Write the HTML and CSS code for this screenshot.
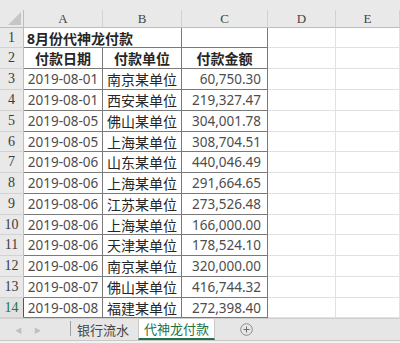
FILE: index.html
```html
<!DOCTYPE html>
<html lang="zh-CN">

<head>
  <meta charset="UTF-8">
  <meta name="viewport" content="width=device-width, initial-scale=1.0">
  <title>代神龙付款</title>
  <link rel="stylesheet" href="styles.css">
</head>

<body>
  <div class="topstrip"></div>

  <div class="sheet">
    <!-- column headers -->
    <div class="corner">
      <svg width="24" height="18" viewBox="0 0 24 18"><polygon points="21,2 21,15 8,15" fill="#c6c6c6"/></svg>
    </div>
    <div class="hd">A</div>
    <div class="hd">B</div>
    <div class="hd">C</div>
    <div class="hd">D</div>
    <div class="hd">E</div>

    <!-- row 1 -->
    <div class="rn">1</div>
    <div class="c t title span2">8月份代神龙付款</div>
    <div class="c t"></div>
    <div class="c"></div>
    <div class="c"></div>

    <!-- row 2 -->
    <div class="rn">2</div>
    <div class="c t head">付款日期</div>
    <div class="c t head">付款单位</div>
    <div class="c t head">付款金额</div>
    <div class="c"></div>
    <div class="c"></div>

    <div class="rn">3</div>
    <div class="c t date">2019-08-01</div>
    <div class="c t unit">南京某单位</div>
    <div class="c t num">60,750.30</div>
    <div class="c"></div>
    <div class="c"></div>

    <div class="rn">4</div>
    <div class="c t date">2019-08-01</div>
    <div class="c t unit">西安某单位</div>
    <div class="c t num">219,327.47</div>
    <div class="c"></div>
    <div class="c"></div>

    <div class="rn">5</div>
    <div class="c t date">2019-08-05</div>
    <div class="c t unit">佛山某单位</div>
    <div class="c t num">304,001.78</div>
    <div class="c"></div>
    <div class="c"></div>

    <div class="rn">6</div>
    <div class="c t date">2019-08-05</div>
    <div class="c t unit">上海某单位</div>
    <div class="c t num">308,704.51</div>
    <div class="c"></div>
    <div class="c"></div>

    <div class="rn">7</div>
    <div class="c t date">2019-08-06</div>
    <div class="c t unit">山东某单位</div>
    <div class="c t num">440,046.49</div>
    <div class="c"></div>
    <div class="c"></div>

    <div class="rn">8</div>
    <div class="c t date">2019-08-06</div>
    <div class="c t unit">上海某单位</div>
    <div class="c t num">291,664.65</div>
    <div class="c"></div>
    <div class="c"></div>

    <div class="rn">9</div>
    <div class="c t date">2019-08-06</div>
    <div class="c t unit">江苏某单位</div>
    <div class="c t num">273,526.48</div>
    <div class="c"></div>
    <div class="c"></div>

    <div class="rn">10</div>
    <div class="c t date">2019-08-06</div>
    <div class="c t unit">上海某单位</div>
    <div class="c t num">166,000.00</div>
    <div class="c"></div>
    <div class="c"></div>

    <div class="rn">11</div>
    <div class="c t date">2019-08-06</div>
    <div class="c t unit">天津某单位</div>
    <div class="c t num">178,524.10</div>
    <div class="c"></div>
    <div class="c"></div>

    <div class="rn">12</div>
    <div class="c t date">2019-08-06</div>
    <div class="c t unit">南京某单位</div>
    <div class="c t num">320,000.00</div>
    <div class="c"></div>
    <div class="c"></div>

    <div class="rn">13</div>
    <div class="c t date">2019-08-07</div>
    <div class="c t unit">佛山某单位</div>
    <div class="c t num">416,744.32</div>
    <div class="c"></div>
    <div class="c"></div>

    <div class="rn active">14</div>
    <div class="c t date">2019-08-08</div>
    <div class="c t unit">福建某单位</div>
    <div class="c t num">272,398.40</div>
    <div class="c"></div>
    <div class="c"></div>
  </div>

  <div class="tabbar">
    <div class="nav">
      <span class="arrow">&#9664;</span>
      <span class="arrow">&#9654;</span>
    </div>
    <div class="sep"></div>
    <div class="tab">银行流水</div>
    <div class="tab current">代神龙付款</div>
    <div class="add">
      <svg width="13" height="13" viewBox="0 0 13 13">
        <circle cx="6.5" cy="6.5" r="5.8" fill="none" stroke="#8a8a8a" stroke-width="1"/>
        <path d="M6.5 3.5v6M3.5 6.5h6" stroke="#6a6a6a" stroke-width="1"/>
      </svg>
    </div>
  </div>
  <div class="bottomstrip"></div>
</body>
</html>
```

FILE: styles.css
```css
body {
  margin: 0;
  width: 400px;
  height: 343px;
  overflow: hidden;
  background-color: #fff;
  font-family: "Noto Sans", "Noto Sans CJK SC", sans-serif;
}

.topstrip {
  height: 10px;
  background-color: #e9e9e9;
}

.sheet {
  display: grid;
  grid-template-columns: 24px 79px 79px 86px 68px 1fr;
  grid-template-rows: 18px 20px 21px repeat(3, 21px 21px 21px 20px);
}

.sheet > div {
  box-sizing: border-box;
  min-width: 0;
  overflow: hidden;
  white-space: nowrap;
}

.corner {
  background-color: #e9e9e9;
  border-right: 1px solid #bdbdbd;
  border-bottom: 1px solid #bdbdbd;
}

.corner svg {
  display: block;
}

.hd {
  display: flex;
  align-items: center;
  justify-content: center;
  background-color: #e9e9e9;
  border-right: 1px solid #d2d2d2;
  border-bottom: 1px solid #bdbdbd;
  font-family: "Liberation Serif", serif;
  font-size: 13px;
  color: #454545;
}

.rn {
  display: flex;
  align-items: center;
  justify-content: center;
  background-color: #e9e9e9;
  border-right: 1px solid #bdbdbd;
  border-bottom: 1px solid #d2d2d2;
  font-family: "Liberation Serif", serif;
  font-size: 14px;
  color: #3c3c3c;
}

.rn.active {
  color: #217346;
  background-color: #e1e1e1;
  border-right: 1px solid #217346;
}

.c {
  display: flex;
  align-items: center;
  border-right: 1px solid #e1e1e1;
  border-bottom: 1px solid #e1e1e1;
  font-size: 14px;
  color: #262626;
}

.c.t {
  border-right-color: #7a7a7a;
  border-bottom-color: #7a7a7a;
}

.span2 {
  grid-column: span 2;
}

.title {
  padding-left: 3px;
  font-weight: bold;
}

.head {
  justify-content: center;
  font-weight: bold;
}

.date {
  justify-content: center;
  font-size: 13.5px;
  color: #4d4d4d;
}

.unit {
  justify-content: center;
}

.num {
  justify-content: flex-end;
  padding-right: 6px;
  font-size: 13.5px;
  color: #4d4d4d;
}

.tabbar {
  display: flex;
  align-items: stretch;
  height: 22px;
  background-color: #e6e6e6;
  border-top: 1px solid #cfcfcf;
  box-sizing: border-box;
}

.nav {
  display: flex;
  align-items: center;
  gap: 12px;
  width: 70px;
  padding-left: 15px;
  box-sizing: border-box;
}

.arrow {
  font-size: 7px;
  color: #c0c0c0;
}

.sep {
  width: 1px;
  margin: 2px 0 4px;
  background-color: #a0a0a0;
}

.tab {
  display: flex;
  align-items: center;
  padding: 0 6px;
  white-space: nowrap;
  font-family: "Noto Sans CJK SC", sans-serif;
  font-size: 13px;
  color: #444;
}

.tab.current {
  width: 77px;
  padding: 0;
  margin-left: 3px;
  box-sizing: border-box;
  justify-content: center;
  background-color: #fff;
  color: #217346;
  border-left: 1px solid #c8c8c8;
  border-right: 1px solid #c8c8c8;
  border-bottom: 2px solid #217346;
}

.add {
  display: flex;
  align-items: center;
  margin-left: 25px;
}

.add svg {
  display: block;
}

.bottomstrip {
  height: 2px;
  background-color: #f2f2f2;
  border-top: 1px solid #c8c8c8;
}
```
